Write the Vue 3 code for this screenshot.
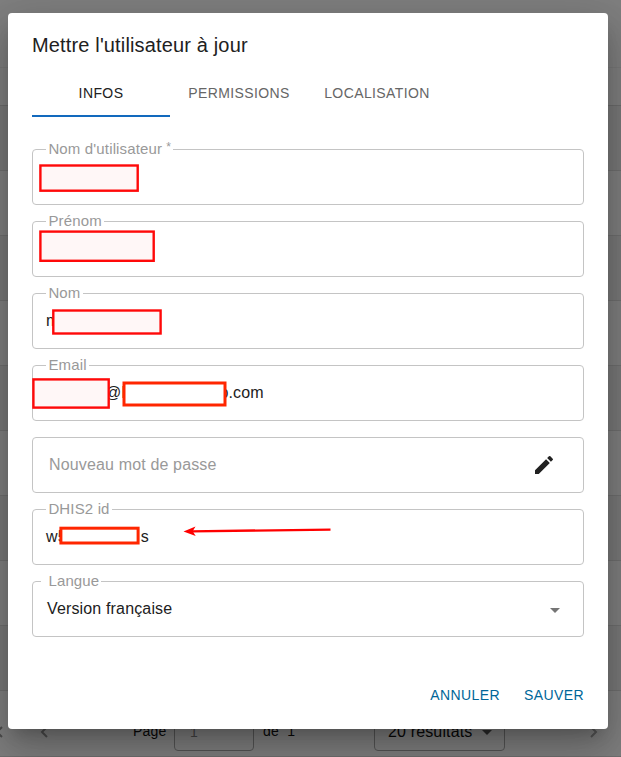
<script setup>
const tabs = ['INFOS', 'PERMISSIONS', 'LOCALISATION']
const rows = 9
const fields = [
  { label: "Nom d'utilisateur", required: true, value: '' },
  { label: 'Prénom', value: '' },
  { label: 'Nom', value: 'm' },
  { label: 'Email', start: '@h', end: 'o.com', email: true },
  { placeholder: 'Nouveau mot de passe', password: true },
  { label: 'DHIS2 id', start: 'w5', end: 's', code: true },
  { label: 'Langue', value: 'Version française', select: true }
]
const masks = [
  { x: 40.4, y: 165.5, w: 97.3, h: 25.2 },
  { x: 40.4, y: 231.6, w: 113.3, h: 29.2 },
  { x: 53.3, y: 310.5, w: 107.3, h: 23 },
  { x: 33.4, y: 379.4, w: 75.3, h: 28.2 },
  { x: 124, y: 383, w: 101, h: 22, solid: true },
  { x: 60.9, y: 528.2, w: 77.2, h: 14.8, solid: true }
]
</script>

<template>
  <div class="screen">
    <div class="page">
      <div class="page-top"></div>
      <div class="table-head"></div>
      <div v-for="n in rows" :key="n" class="table-row"></div>
      <div class="pager">
        <svg class="chev first" viewBox="0 0 12 12"><path d="M10 1 5 6l5 5" /></svg>
        <svg class="chev prev" viewBox="0 0 12 12"><path d="M9 1 4 6l5 5" /></svg>
        <span class="page-label">Page</span>
        <span class="page-input">1</span>
        <span class="page-total">de&nbsp; 1</span>
        <span class="page-size">20 résultats<i class="caret dark"></i></span>
        <svg class="chev next" viewBox="0 0 12 12"><path d="m3 1 5 5-5 5" /></svg>
      </div>
    </div>
    <div class="backdrop">
      <section class="dialog">
        <h2>Mettre l'utilisateur à jour</h2>
        <nav>
          <button v-for="(t, i) in tabs" :key="t" :class="{ active: i === 0 }">{{ t }}</button>
        </nav>
        <div class="form">
          <div v-for="(f, i) in fields" :key="i" class="field" :class="{ password: f.password, select: f.select }">
            <label v-if="f.label">{{ f.label }}<sup v-if="f.required">*</sup></label>
            <span v-if="f.placeholder" class="placeholder">{{ f.placeholder }}</span>
            <span v-else-if="f.start" class="split" :class="{ email: f.email, code: f.code }"><span>{{ f.start }}</span><span>{{ f.end }}</span></span>
            <span v-else class="value">{{ f.value }}</span>
            <svg v-if="f.password" class="pencil" viewBox="0 0 24 24"><path d="M3 17.25V21h3.75L17.81 9.94l-3.75-3.75L3 17.25zM20.71 7.04a1 1 0 0 0 0-1.41l-2.34-2.34a1 1 0 0 0-1.41 0l-1.83 1.83 3.75 3.75 1.83-1.83z" /></svg>
            <i v-if="f.select" class="caret"></i>
          </div>
        </div>
        <footer><button>ANNULER</button><button>SAUVER</button></footer>
      </section>
    </div>
    <svg class="marks" viewBox="0 0 621 757">
      <rect v-for="(m, i) in masks" :key="i" :class="{ solid: m.solid }" :x="m.x" :y="m.y" :width="m.w" :height="m.h" />
      <path class="shaft" d="M191 531.3 330.5 529.6" />
      <path class="head" d="m183.5 531.4 12-5-2.8 4.9 3 4.6z" />
    </svg>
  </div>
</template>

<style>
body { margin: 0; overflow: hidden; }
</style>

<style scoped>
* { box-sizing: border-box; }
.screen { position: relative; width: 621px; height: 757px; overflow: hidden; background: #fff; font-family: "Liberation Sans", Arial, sans-serif; font-size: 16px; letter-spacing: .15px; color: #212121; }
.page { height: 757px; display: flex; flex-direction: column; }
.page-top { height: 67px; }
.table-head { height: 39px; border-top: 1px solid #f2f2f2; border-bottom: 1px solid #d8d8d8; }
.table-row { height: 65px; flex: none; border-bottom: 1px solid #dedede; }
.table-row:nth-child(odd) { background: #f2f2f2; }
.pager { height: 66px; display: flex; align-items: flex-start; border-bottom: 1px solid #e0e0e0; font-size: 14px; letter-spacing: .2px; color: #111; }
.chev { width: 12px; height: 12px; margin-top: 35px; flex: none; fill: none; stroke: #999; stroke-width: 2; }
.first { margin-left: -8px; }
.prev { margin-left: 34px; }
.next { margin-left: 83px; stroke: #aaa; }
.page-label { width: 41px; flex: none; margin-left: 83px; padding-top: 32px; }
.page-input { width: 80px; flex: none; height: 60px; padding: 32px 0 0 15px; border: 1px solid #aaa; border-radius: 4px; color: #888; }
.page-total { width: 120px; flex: none; padding: 32px 0 0 9px; }
.page-size { display: flex; width: 131px; flex: none; height: 60px; padding: 31px 0 0 13px; border: 1px solid #aaa; border-radius: 4px; font-size: 16px; letter-spacing: .15px; }
.backdrop { position: absolute; inset: 0; padding: 13px 13px 28px 8px; background: rgba(0, 0, 0, .5); }
.dialog { width: 600px; height: 716px; padding: 16px 24px; display: flex; flex-direction: column; background: #fff; border-radius: 4px; box-shadow: 0 11px 15px -7px rgba(0,0,0,.2), 0 24px 38px 3px rgba(0,0,0,.14), 0 9px 46px 8px rgba(0,0,0,.12); }
h2 { height: 32px; margin: 0; font-size: 20px; line-height: 32px; font-weight: 400; letter-spacing: .15px; }
nav { display: flex; height: 48px; margin-top: 8px; }
button { padding: 0; border: 0; background: none; font: 14px/24px "Liberation Sans", Arial, sans-serif; letter-spacing: .4px; color: #006699; }
nav button { width: 138px; color: #666; border-bottom: 2px solid transparent; padding-top: 2px; }
nav .active { color: #212121; border-color: #1269bd; }
.form { display: flex; flex-direction: column; gap: 16px; margin-top: 32px; }
.field { position: relative; display: flex; align-items: center; height: 56px; border: 1px solid #c4c4c4; border-radius: 4px; padding: 5px 14px 0 13px; }
label { position: absolute; left: 13px; top: -10px; padding: 0 2px 0 2.4px; background: #fff; font-size: 15px; line-height: 18px; letter-spacing: .15px; color: #999; white-space: nowrap; }
sup { font-size: 12px; line-height: 0; vertical-align: 3px; margin-left: 4px; }
.placeholder { flex: 1; color: #999; }
.password { padding: 0 27px 0 16px; }
.pencil { width: 24px; height: 24px; fill: #212121; }
.select { padding: 0 23px 0 14px; justify-content: space-between; }
.select label { left: 8px; padding-left: 7.4px; }
.split { display: flex; }
.field .split, .field .value { padding-bottom: 5px; }
.field.select .value { padding-bottom: 1px; }
.email { padding-left: 59px; gap: 89px; }
.code { gap: 74px; }
.caret { width: 0; height: 0; margin-top: 3px; border: 5px solid transparent; border-top-color: #757575; border-bottom: 0; }
.dark { margin: 7px 0 0 9px; border-top-color: #555; }
footer { display: flex; justify-content: flex-end; gap: 24px; margin-top: 46px; }
.marks { position: absolute; inset: 0; width: 621px; height: 757px; }
.marks rect { fill: #fff7f7; stroke: #ff0909; stroke-width: 2.4; }
.marks .solid { fill: #fff; stroke: #ff2600; stroke-width: 3; }
.shaft { stroke: #f00; stroke-width: 2.3; }
.head { fill: #f00; }
</style>
